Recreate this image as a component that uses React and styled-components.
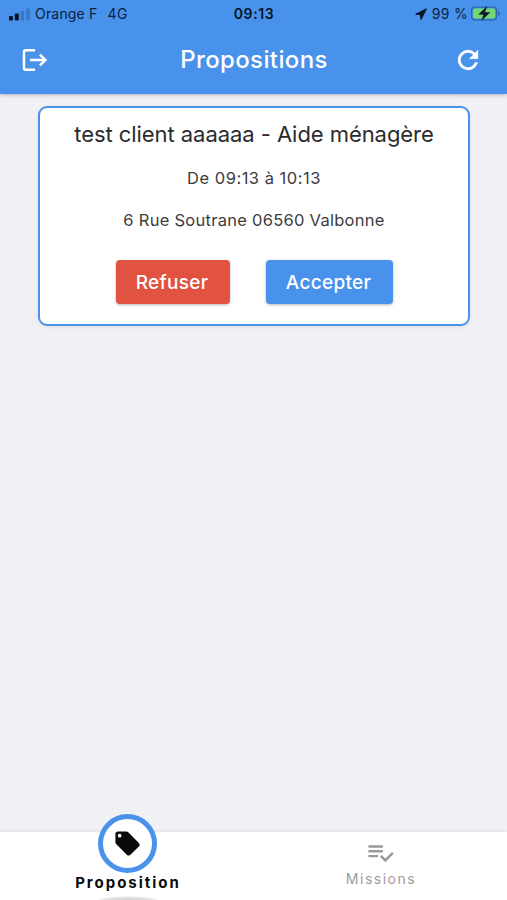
import React from 'react';
import styled, { createGlobalStyle } from 'styled-components';
import { MdLocalOffer } from 'react-icons/md';

const GlobalStyle = createGlobalStyle`
  * {
    box-sizing: border-box;
  }
  body {
    margin: 0;
    background: #f0f0f5;
    font-family: Inter, "Liberation Sans", sans-serif;
  }
`

const Screen = styled('div')`
  display: flex;
  flex-direction: column;
  height: 900px;
  overflow: hidden;
  background: #f0f0f5;
`

const Header = styled('header')`
  height: 94px;
  flex-shrink: 0;
  background: #4992eb;
  box-shadow: 0 1px 4px rgba(60, 60, 100, 0.35);
`

const StatusBar = styled('div')`
  display: grid;
  grid-template-columns: 1fr auto 1fr;
  align-items: center;
  height: 28px;
  padding: 0 7px 0 9px;
  color: #0b2240;
  font-size: 14px;
  line-height: 18px;
  white-space: nowrap;
`

const StatusGroup = styled('div')`
  display: flex;
  align-items: center;
  justify-content: ${({ $end }) => ($end ? 'flex-end' : 'flex-start')};
`

const Carrier = styled('span')`
  margin-left: 5px;
  letter-spacing: 0.18px;
`

const Network = styled('span')`
  margin-left: 10px;
  letter-spacing: 0.4px;
`

const Clock = styled('span')`
  margin-right: 1px;
  color: #06152a;
  font-weight: 600;
  letter-spacing: 0.6px;
`

const BatteryLevel = styled('span')`
  margin: 0 3px 0 5px;
  letter-spacing: 0.3px;
`

const Toolbar = styled('div')`
  display: flex;
  align-items: center;
  justify-content: space-between;
  height: 64px;
  padding: 0 24px 0 20px;
  color: #fff;
`

const IconButton = styled('button')`
  display: flex;
  padding: 0;
  border: 0;
  background: none;
  color: inherit;
`

const PageTitle = styled('h1')`
  margin: 0 0 0 5px;
  font-size: 24px;
  font-weight: 500;
  line-height: 30px;
  letter-spacing: 0.38px;
`

const Content = styled('main')`
  flex: 1;
  padding: 12px 37px 0 38px;
`

const Card = styled('section')`
  display: flex;
  flex-direction: column;
  align-items: center;
  height: 220px;
  padding-top: 12px;
  border: 2px solid #4992eb;
  border-radius: 9px;
  background: #fff;
  box-shadow: 0 1px 4px rgba(0, 0, 0, 0.08);
  white-space: nowrap;
`

const CardTitle = styled('h2')`
  margin: 0;
  color: #2b2b2d;
  font-size: 22px;
  font-weight: 400;
  line-height: 28px;
  letter-spacing: -0.06px;
`

const CardLine = styled('p')`
  margin: ${({ $gap }) => $gap}px 0 0;
  color: #3c3c3e;
  font-size: 16.5px;
  line-height: 22px;
  letter-spacing: ${({ $spacing }) => $spacing}px;
`

const Actions = styled('div')`
  display: flex;
  gap: 36px;
  margin-top: 29px;
`

const ActionButton = styled('button')`
  width: ${({ $width }) => $width}px;
  height: 44px;
  padding: 0 1px 0 0;
  border: 0;
  border-radius: 4px;
  background: ${({ $color }) => $color};
  box-shadow: 0 1px 3px rgba(0, 0, 0, 0.28);
  color: #fff;
  font-family: inherit;
  font-size: 19px;
  font-weight: 500;
  letter-spacing: 0.3px;
`

const TabBar = styled('nav')`
  display: grid;
  grid-template-columns: 1fr 1fr;
  height: 68px;
  padding-left: 1px;
  background: #fff;
  box-shadow: 0 -1px 3px rgba(0, 0, 0, 0.08);
`

const Tab = styled('div')`
  display: flex;
  flex-direction: column;
  align-items: center;
  color: ${({ $active }) => ($active ? '#0a0a0a' : '#9b9b9b')};
`

const TabCircle = styled('div')`
  display: flex;
  align-items: center;
  justify-content: center;
  flex-shrink: 0;
  width: 59px;
  height: 59px;
  margin-top: -18px;
  border: 5px solid #4992eb;
  border-radius: 50%;
  background: #fff;
`

const TabIcon = styled('div')`
  display: flex;
  margin-top: 6px;
`

const TabLabel = styled('span')`
  font-size: ${({ $active }) => ($active ? 15 : 14)}px;
  font-weight: ${({ $active }) => ($active ? 700 : 400)};
  line-height: 18px;
  letter-spacing: ${({ $active }) => ($active ? 1.98 : 1.5)}px;
  margin-left: 1px;
  margin-top: ${({ $active }) => ($active ? 1 : 3)}px;
`

const TabShadow = styled('div')`
  width: 68px;
  height: 12px;
  flex-shrink: 0;
  margin-top: 4px;
  border-radius: 50%;
  background: radial-gradient(closest-side, #c4c4c4, #e6e6e6 85%, #fff);
`

const SignalIcon = () => (
  <svg width="21" height="13" viewBox="0 0 21 13">
    <rect x="0" y="8" width="4" height="4.5" rx="1" fill="#06152a" />
    <rect x="5.8" y="5.5" width="4" height="7" rx="1" fill="#06152a" />
    <rect x="11.6" y="3" width="3.6" height="9.5" rx="1" fill="#3a78c4" />
    <rect x="17.2" y="0.5" width="3.6" height="12" rx="1" fill="#3a78c4" />
  </svg>
)

const LocationIcon = () => (
  <svg width="12" height="12" viewBox="0 0 12 12">
    <path d="M11.2 1 1 6.2l4.6.5.4 4.5z" fill="#06152a" stroke="#06152a" strokeWidth="1.2" strokeLinejoin="round" />
  </svg>
)

const BatteryIcon = () => (
  <svg width="29" height="16" viewBox="0 0 29 16">
    <rect x=".6" y="1.1" width="25" height="12.8" rx="3.4" fill="none" stroke="#2c65a8" strokeWidth="1.2" />
    <rect x="2.1" y="2.6" width="22" height="9.8" rx="2" fill="#75d673" />
    <path d="M27 5.1c2.2.8 2.2 4 0 4.8z" fill="#2c65a8" />
    <path d="M15.8.7 7.8 8.3h5l-2 6 8-7.8h-5.2z" fill="#06152a" stroke="#06152a" strokeWidth=".5" />
  </svg>
)

const LogoutIcon = () => (
  <svg width="30" height="30" viewBox="0 0 30 30" fill="none" stroke="currentColor" strokeWidth="2.5">
    <path d="M15 5.3H5.8Q4 5.3 4 7.1v15.8q0 1.8 1.8 1.8H15" />
    <path d="M10 15h15.2M20 9.6 25.4 15 20 20.4" />
  </svg>
)

const RefreshIcon = () => (
  <svg width="30" height="30" viewBox="0 0 24 24" fill="currentColor" stroke="currentColor" strokeWidth=".3">
    <path d="M17.65 6.35A7.96 7.96 0 0 0 12 4a8 8 0 1 0 7.73 10h-2.08A6 6 0 1 1 12 6c1.66 0 3.14.69 4.22 1.78L13 11h7V4z" />
  </svg>
)

const ChecklistIcon = () => (
  <svg width="29" height="29" viewBox="0 0 24 24" fill="currentColor">
    <path d="M14 10H2v2h12v-2zm0-4H2v2h12V6zM2 16h8v-2H2v2zm19.5-4.5L23 13l-6.99 7-4.51-4.5L13 14l3.01 3 5.49-5.5z" />
  </svg>
)

const App = () => {
  return (
    <Screen>
      <GlobalStyle />
      <Header>
        <StatusBar>
          <StatusGroup>
            <SignalIcon />
            <Carrier>Orange F</Carrier>
            <Network>4G</Network>
          </StatusGroup>
          <Clock>09:13</Clock>
          <StatusGroup $end>
            <LocationIcon />
            <BatteryLevel>99 %</BatteryLevel>
            <BatteryIcon />
          </StatusGroup>
        </StatusBar>
        <Toolbar>
          <IconButton><LogoutIcon /></IconButton>
          <PageTitle>Propositions</PageTitle>
          <IconButton><RefreshIcon /></IconButton>
        </Toolbar>
      </Header>
      <Content>
        <Card>
          <CardTitle>test client aaaaaa - Aide ménagère</CardTitle>
          <CardLine $gap={19} $spacing={0.5}>De 09:13 à 10:13</CardLine>
          <CardLine $gap={20} $spacing={0.27}>6 Rue Soutrane 06560 Valbonne</CardLine>
          <Actions>
            <ActionButton $color="#e15241" $width={114}>Refuser</ActionButton>
            <ActionButton $color="#4992eb" $width={127}>Accepter</ActionButton>
          </Actions>
        </Card>
      </Content>
      <TabBar>
        <Tab $active>
          <TabCircle><MdLocalOffer size={29} /></TabCircle>
          <TabLabel $active>Proposition</TabLabel>
          <TabShadow />
        </Tab>
        <Tab>
          <TabIcon><ChecklistIcon /></TabIcon>
          <TabLabel>Missions</TabLabel>
        </Tab>
      </TabBar>
    </Screen>
  );
};

export default App;
